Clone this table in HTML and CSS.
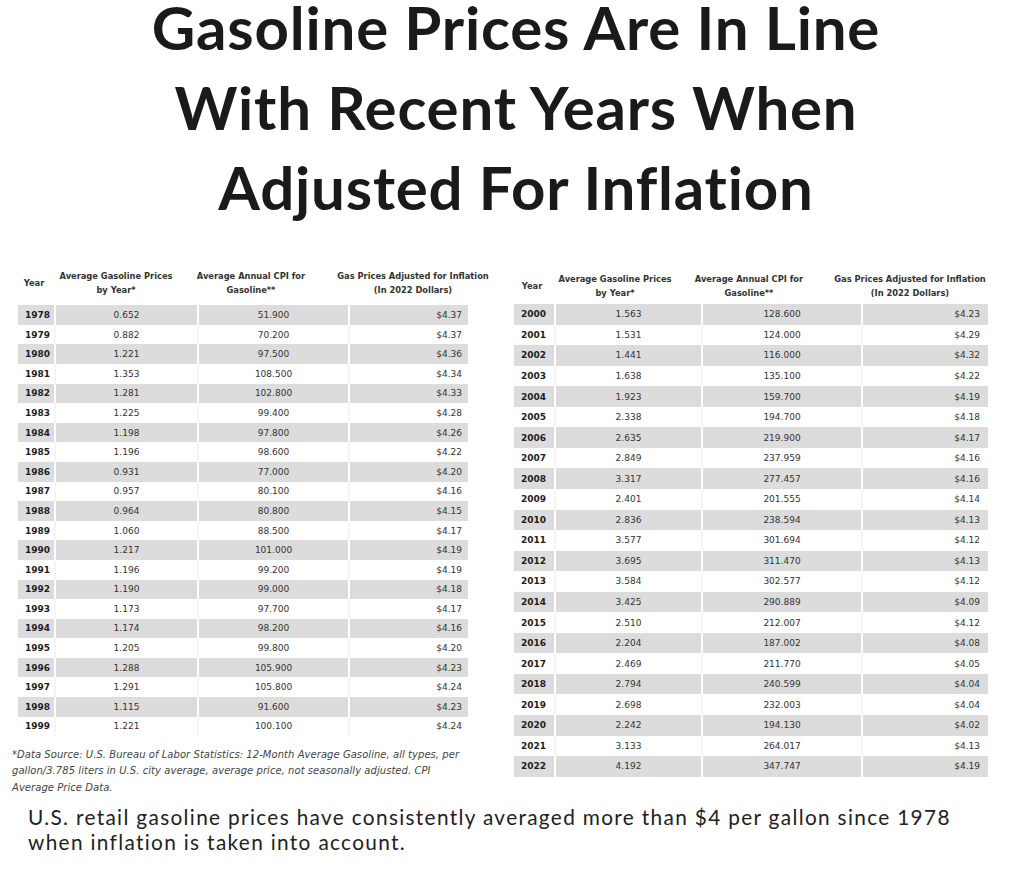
FILE: index.html
```html
<!DOCTYPE html>
<html lang="en">
<head>
<meta charset="utf-8">
<title>Gasoline Prices Adjusted For Inflation</title>
<link rel="stylesheet" href="styles.css">
</head>
<body>
<main class="page">
  <h1 class="title">Gasoline Prices Are In Line<br>With Recent Years When<br>Adjusted For Inflation</h1>

  <section class="tables">
    <div class="col col-left">
      <div class="thead thead-left">
        <div class="th">Year</div>
        <div class="th">Average Gasoline Prices<br>by Year*</div>
        <div class="th">Average Annual CPI for<br>Gasoline**</div>
        <div class="th">Gas Prices Adjusted for Inflation<br>(In 2022 Dollars)</div>
      </div>
      <table class="data data-left">
        <colgroup><col class="l1"><col class="l2"><col class="l3"><col class="l4"></colgroup>
        <tbody>
          <tr><td>1978</td><td>0.652</td><td>51.900</td><td>$4.37</td></tr>
          <tr><td>1979</td><td>0.882</td><td>70.200</td><td>$4.37</td></tr>
          <tr><td>1980</td><td>1.221</td><td>97.500</td><td>$4.36</td></tr>
          <tr><td>1981</td><td>1.353</td><td>108.500</td><td>$4.34</td></tr>
          <tr><td>1982</td><td>1.281</td><td>102.800</td><td>$4.33</td></tr>
          <tr><td>1983</td><td>1.225</td><td>99.400</td><td>$4.28</td></tr>
          <tr><td>1984</td><td>1.198</td><td>97.800</td><td>$4.26</td></tr>
          <tr><td>1985</td><td>1.196</td><td>98.600</td><td>$4.22</td></tr>
          <tr><td>1986</td><td>0.931</td><td>77.000</td><td>$4.20</td></tr>
          <tr><td>1987</td><td>0.957</td><td>80.100</td><td>$4.16</td></tr>
          <tr><td>1988</td><td>0.964</td><td>80.800</td><td>$4.15</td></tr>
          <tr><td>1989</td><td>1.060</td><td>88.500</td><td>$4.17</td></tr>
          <tr><td>1990</td><td>1.217</td><td>101.000</td><td>$4.19</td></tr>
          <tr><td>1991</td><td>1.196</td><td>99.200</td><td>$4.19</td></tr>
          <tr><td>1992</td><td>1.190</td><td>99.000</td><td>$4.18</td></tr>
          <tr><td>1993</td><td>1.173</td><td>97.700</td><td>$4.17</td></tr>
          <tr><td>1994</td><td>1.174</td><td>98.200</td><td>$4.16</td></tr>
          <tr><td>1995</td><td>1.205</td><td>99.800</td><td>$4.20</td></tr>
          <tr><td>1996</td><td>1.288</td><td>105.900</td><td>$4.23</td></tr>
          <tr><td>1997</td><td>1.291</td><td>105.800</td><td>$4.24</td></tr>
          <tr><td>1998</td><td>1.115</td><td>91.600</td><td>$4.23</td></tr>
          <tr><td>1999</td><td>1.221</td><td>100.100</td><td>$4.24</td></tr>
        </tbody>
      </table>
      <p class="footnote">*Data Source: U.S. Bureau of Labor Statistics: 12-Month Average Gasoline, all types, per<br>gallon/3.785 liters in U.S. city average, average price, not seasonally adjusted. CPI<br>Average Price Data.</p>
    </div>

    <div class="col col-right">
      <div class="thead thead-right">
        <div class="th">Year</div>
        <div class="th">Average Gasoline Prices<br>by Year*</div>
        <div class="th">Average Annual CPI for<br>Gasoline**</div>
        <div class="th">Gas Prices Adjusted for Inflation<br>(In 2022 Dollars)</div>
      </div>
      <table class="data data-right">
        <colgroup><col class="r1"><col class="r2"><col class="r3"><col class="r4"></colgroup>
        <tbody>
          <tr><td>2000</td><td>1.563</td><td>128.600</td><td>$4.23</td></tr>
          <tr><td>2001</td><td>1.531</td><td>124.000</td><td>$4.29</td></tr>
          <tr><td>2002</td><td>1.441</td><td>116.000</td><td>$4.32</td></tr>
          <tr><td>2003</td><td>1.638</td><td>135.100</td><td>$4.22</td></tr>
          <tr><td>2004</td><td>1.923</td><td>159.700</td><td>$4.19</td></tr>
          <tr><td>2005</td><td>2.338</td><td>194.700</td><td>$4.18</td></tr>
          <tr><td>2006</td><td>2.635</td><td>219.900</td><td>$4.17</td></tr>
          <tr><td>2007</td><td>2.849</td><td>237.959</td><td>$4.16</td></tr>
          <tr><td>2008</td><td>3.317</td><td>277.457</td><td>$4.16</td></tr>
          <tr><td>2009</td><td>2.401</td><td>201.555</td><td>$4.14</td></tr>
          <tr><td>2010</td><td>2.836</td><td>238.594</td><td>$4.13</td></tr>
          <tr><td>2011</td><td>3.577</td><td>301.694</td><td>$4.12</td></tr>
          <tr><td>2012</td><td>3.695</td><td>311.470</td><td>$4.13</td></tr>
          <tr><td>2013</td><td>3.584</td><td>302.577</td><td>$4.12</td></tr>
          <tr><td>2014</td><td>3.425</td><td>290.889</td><td>$4.09</td></tr>
          <tr><td>2015</td><td>2.510</td><td>212.007</td><td>$4.12</td></tr>
          <tr><td>2016</td><td>2.204</td><td>187.002</td><td>$4.08</td></tr>
          <tr><td>2017</td><td>2.469</td><td>211.770</td><td>$4.05</td></tr>
          <tr><td>2018</td><td>2.794</td><td>240.599</td><td>$4.04</td></tr>
          <tr><td>2019</td><td>2.698</td><td>232.003</td><td>$4.04</td></tr>
          <tr><td>2020</td><td>2.242</td><td>194.130</td><td>$4.02</td></tr>
          <tr><td>2021</td><td>3.133</td><td>264.017</td><td>$4.13</td></tr>
          <tr><td>2022</td><td>4.192</td><td>347.747</td><td>$4.19</td></tr>
        </tbody>
      </table>
    </div>
  </section>

  <p class="summary">U.S. retail gasoline prices have consistently averaged more than $4 per gallon since 1978<br>when inflation is taken into account.</p>
</main>
</body>
</html>
```

FILE: styles.css
```css
html, body {
  margin: 0;
  padding: 0;
  background: #ffffff;
}

.page {
  width: 1024px;
  height: 888px;
  overflow: hidden;
}

.title {
  margin: -13px 0 0 0;
  padding-left: 8px;
  font-family: Lato, "Open Sans", sans-serif;
  font-weight: 700;
  font-size: 60px;
  line-height: 80px;
  letter-spacing: 0.8px;
  color: #1a1a1a;
  text-align: center;
}

.tables {
  display: flex;
  align-items: flex-start;
  gap: 8px;
  margin-top: 42px;
  padding-left: 18px;
}

.col {
  width: 488px;
  flex: none;
}

.col-right {
  padding-top: 3px;
}

.thead {
  display: grid;
  align-items: center;
  font-family: "DejaVu Sans", Verdana, sans-serif;
  font-weight: 700;
  font-size: 8.3px;
  line-height: 14.3px;
  color: #333333;
  text-align: center;
}

.thead-left {
  grid-template-columns: 32px 132px 138px 186px;
  margin-bottom: 7.6px;
}

.thead-right {
  grid-template-columns: 36px 130px 138px 184px;
  margin-bottom: 3.5px;
}

.data {
  border-collapse: collapse;
  table-layout: fixed;
  font-family: "DejaVu Sans", Verdana, sans-serif;
  font-size: 9px;
  color: #333333;
}

.data-left { width: 450px; }
.data-right { width: 474px; }

.l1 { width: 37px; }
.l2 { width: 143px; }
.l3 { width: 151px; }
.l4 { width: 119px; }

.r1 { width: 41px; }
.r2 { width: 147px; }
.r3 { width: 160px; }
.r4 { width: 126px; }

.data td {
  padding: 0;
  text-align: center;
  border-left: 2px solid #f5f5f5;
  white-space: nowrap;
}

.data td:first-child {
  border-left: none;
  text-align: left;
  padding-left: 7px;
  font-weight: 700;
  color: #1e1e1e;
}

.data td:last-child {
  text-align: right;
}

.data-left td:last-child { padding-right: 6px; }
.data-right td:last-child { padding-right: 8px; }

.data tr:nth-child(odd) td {
  background: #dcdcdc;
  border-left-color: #ffffff;
}

.data tr:nth-child(odd) td:first-child {
  border-left: none;
}

.data-left tr { height: 19.6px; }
.data-right tr { height: 20.55px; }

.footnote {
  margin: 10.4px 0 0 -6px;
  font-family: "DejaVu Sans", Verdana, sans-serif;
  font-style: italic;
  font-size: 10px;
  line-height: 16.7px;
  letter-spacing: 0.05px;
  color: #444444;
  white-space: nowrap;
}

.summary {
  margin: 7px 0 0 0;
  padding-left: 28px;
  font-family: Lato, "Open Sans", sans-serif;
  font-size: 20.8px;
  line-height: 25px;
  letter-spacing: 1.33px;
  color: #222222;
  white-space: nowrap;
}
```
